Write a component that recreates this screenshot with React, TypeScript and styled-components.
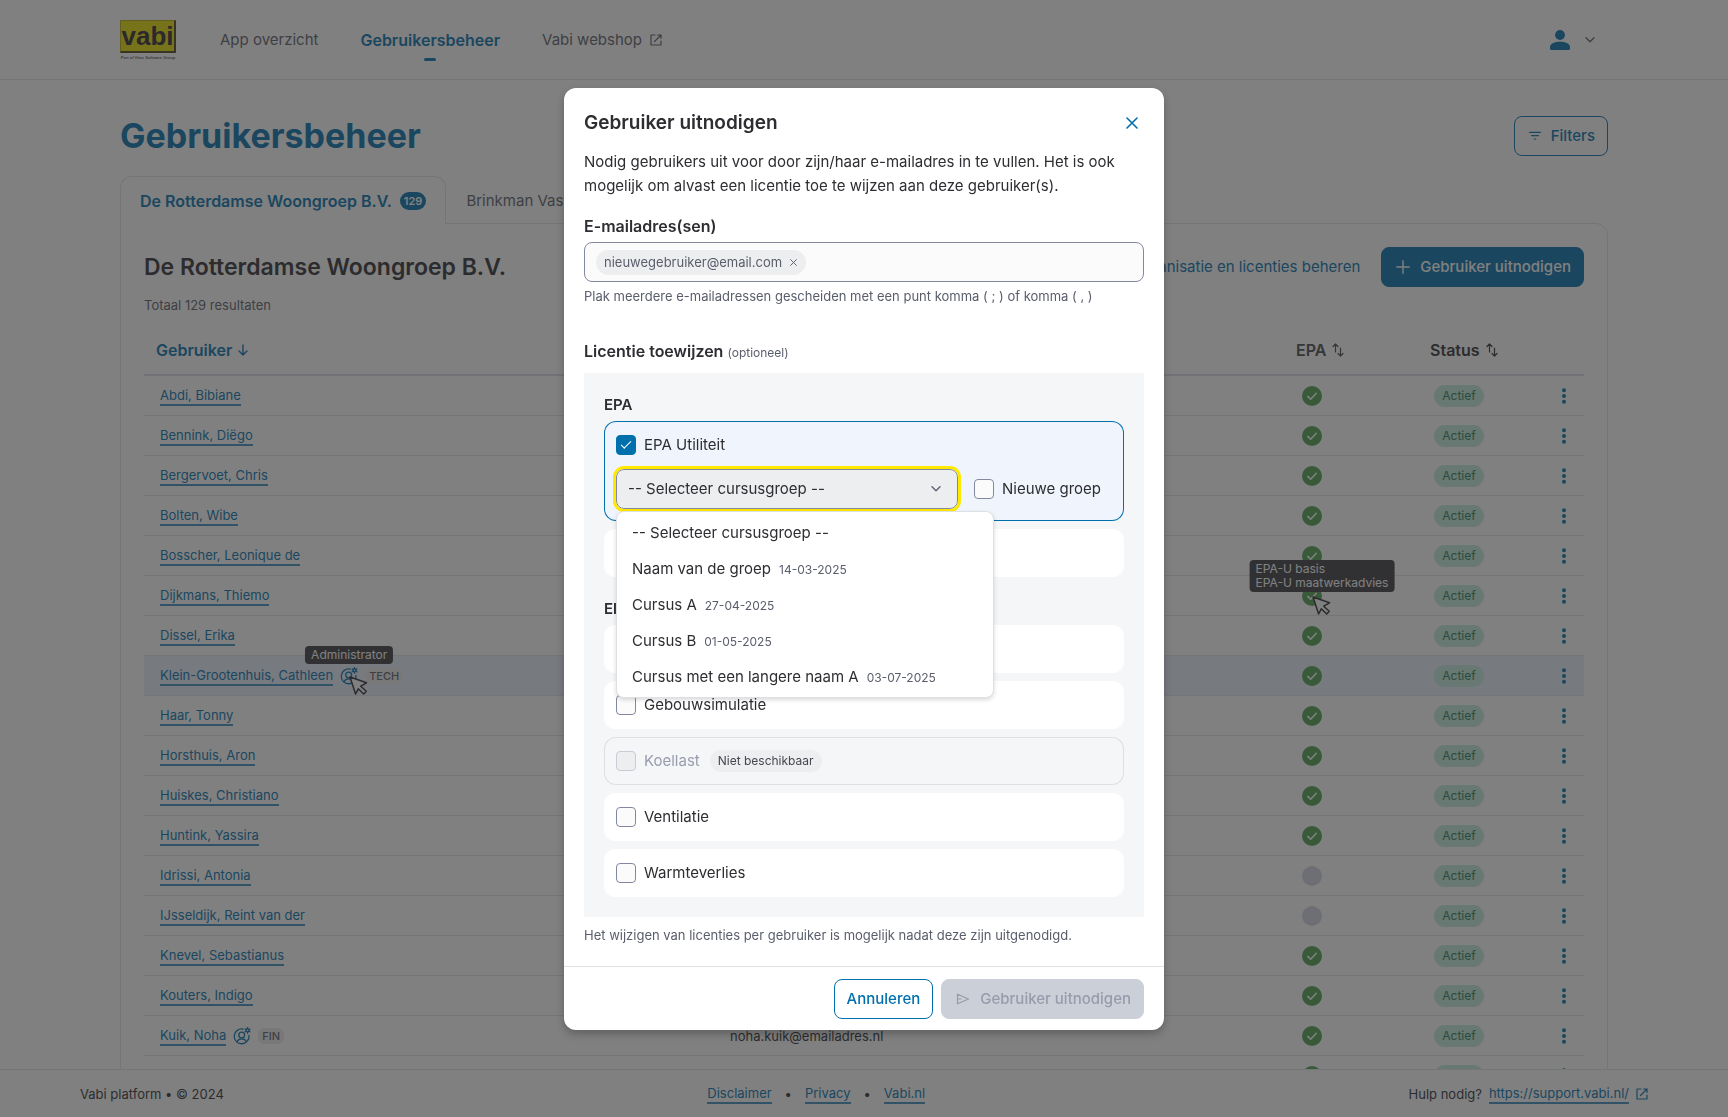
import React from 'react';
import styled, { createGlobalStyle } from 'styled-components';

const c = {
  blue: '#0070ad',
  text: '#2d2d32',
  muted: '#5a5d6b',
  line: '#e2e3e6',
  field: '#8388a0',
  pale: '#edeef0',
};

const GlobalStyle = createGlobalStyle`
  *, *::before, *::after { box-sizing: border-box; }
  body {
    margin: 0;
    background: #fff;
    color: ${c.text};
    font: 400 15px/24px Inter, "Noto Sans", sans-serif;
  }
  button, input, select { font: inherit; color: inherit; }
  button { cursor: pointer; }
  h1, h2, h3, p, ul { margin: 0; padding: 0; }
  svg { display: block; flex: none; }
`;

/* ---------- icons ---------- */

const Stroke = styled.svg`
  fill: none;
  stroke: currentColor;
  stroke-linecap: round;
  stroke-linejoin: round;
`;

const ExternalIcon = ({ color }: { color?: string }) => (
  <Stroke width={12} height={12} viewBox="0 0 12 12" strokeWidth={1.2} color={color}>
    <path d="M5 1H1v10h10V7M7.5 1H11v3.500M11 1 4.500 7.500" />
  </Stroke>
);

const ChevronIcon = () => (
  <Stroke width={10} height={6} viewBox="0 0 10 6" strokeWidth={1.3}>
    <path d="m1 .8 4 4 4-4" />
  </Stroke>
);

const CloseIcon = ({ size }: { size: number }) => (
  <Stroke width={size} height={size} viewBox="0 0 12 12" strokeWidth={1.6}>
    <path d="m1 1 10 10M11 1 1 11" />
  </Stroke>
);

const PlusIcon = () => (
  <Stroke width={14} height={14} viewBox="0 0 14 14" strokeWidth={1.4}>
    <path d="M7 .8v12.400M.8 7h12.400" />
  </Stroke>
);

const FilterIcon = () => (
  <Stroke width={12} height={12} viewBox="0 0 12 12" strokeWidth={1.2}>
    <path d="M.6 2.400h10.800M2.600 5.600h6.800M5.200 9h1.600" />
  </Stroke>
);

const ArrowDownIcon = () => (
  <Stroke width={10} height={12} viewBox="0 0 10 12" strokeWidth={1.4}>
    <path d="M5 1v10M1 7l4 4 4-4" />
  </Stroke>
);

const SortIcon = () => (
  <Stroke width={12} height={14} viewBox="0 0 12 14" strokeWidth={1.2}>
    <path d="M3.500 9V1M1 3.500 3.500 1 6 3.500M8.500 5v8M6 10.500l2.500 2.500 2.500-2.500" />
  </Stroke>
);

const SendIcon = () => (
  <Stroke width={14} height={12} viewBox="0 0 14 12" strokeWidth={1.2}>
    <path d="M1.500 1.200 12.500 6l-11 4.800zM1.500 6H5" />
  </Stroke>
);

const UserIcon = () => (
  <svg width={20} height={20} viewBox="0 0 20 20" fill={c.blue}>
    <circle cx="10" cy="5" r="4.900" />
    <path d="M0 17c0-3.400 5-5.200 10-5.200S20 13.600 20 17v1.500a1.500 1.500 0 0 1-1.500 1.500h-17A1.500 1.500 0 0 1 0 18.500z" />
  </svg>
);

const AdminIcon = () => (
  <Stroke width={18} height={18} viewBox="0 0 18 18" strokeWidth={1.3} color={c.blue}>
    <path d="M10.200 2.100A7.400 7.400 0 1 0 16 8.400" />
    <circle cx="8.700" cy="8" r="2.900" />
    <path d="M4 14.800c.8-2 2.500-3 4.700-3s3.900 1 4.700 3" />
    <circle cx="14.500" cy="3.400" r="1.500" />
    <path d="M14.500.6v1.200M14.500 5v1.200M12.100 2l1 .6M15.900 4.200l1 .6M12.100 4.800l1-.6M15.900 2.600l1-.6" />
  </Stroke>
);

const CheckCircle = () => (
  <svg width={20} height={20} viewBox="0 0 20 20">
    <circle cx="10" cy="10" r="10" fill="#4fa04c" />
    <path d="m5.800 10.400 2.900 2.900 5.600-6" fill="none" stroke="#fff" strokeWidth={1.5} strokeLinecap="round" strokeLinejoin="round" />
  </svg>
);

const DotsIcon = () => (
  <svg width={4} height={16} viewBox="0 0 4 16" fill={c.blue}>
    <circle cx="2" cy="2.200" r="2" />
    <circle cx="2" cy="8" r="2" />
    <circle cx="2" cy="13.800" r="2" />
  </svg>
);

const PointerIcon = () => (
  <svg width={20} height={20} viewBox="0 0 20 20">
    <path
      d="m1 1 16.500 5.800-5.800 3.400 5.600 5-2.600 2.800-5.400-5.200L6.600 18z"
      fill="#fff" stroke="#2d2d32" strokeWidth={1.5} strokeLinejoin="round"
    />
  </svg>
);

/* ---------- page ---------- */

const Shell = styled.div`
  height: 100vh;
  display: flex;
  flex-direction: column;
`;

const TopBar = styled.header`
  flex: none;
  display: flex;
  align-items: center;
  height: 80px;
  padding: 0 120px;
  border-bottom: 1px solid ${c.line};
`;

const Logo = styled.a`
  display: flex;
  flex-direction: column;
  width: 56px;
  gap: 2px;
  text-decoration: none;
`;

const LogoMark = styled.span`
  height: 33px;
  border: 1px solid #b3ab10;
  border-right: 2px solid #4b4818;
  border-bottom: 2px solid #4b4818;
  background: #e9df00;
  color: #2d262d;
  font: 700 26px/30px "Liberation Sans", Arial, sans-serif;
  text-align: center;
`;

const LogoCaption = styled.span`
  color: ${c.muted};
  font: 700 4px/5px "Liberation Sans", Arial, sans-serif;
  text-align: center;
  white-space: nowrap;
`;

const Nav = styled.nav`
  display: flex;
  gap: 42px;
  margin-left: 44px;
`;

const NavLink = styled.a<{ $active?: boolean }>`
  position: relative;
  display: flex;
  align-items: center;
  gap: 8px;
  color: ${p => (p.$active ? c.blue : c.muted)};
  font-size: ${p => (p.$active ? 16 : 15)}px;
  font-weight: ${p => (p.$active ? 600 : 400)};
  text-decoration: none;
  ${p => p.$active && `
    &::after {
      content: '';
      position: absolute;
      left: 50%;
      bottom: -9px;
      width: 12px;
      height: 3px;
      margin-left: -6px;
      border-radius: 2px;
      background: ${c.blue};
    }
  `}
`;

const AccountButton = styled.button`
  display: flex;
  align-items: center;
  gap: 15px;
  margin-left: auto;
  padding: 0 13px;
  border: 0;
  background: none;
  color: ${c.muted};
`;

const Main = styled.main`
  flex: 1;
  min-height: 0;
  overflow: hidden;
  padding: 36px 120px 0;
`;

const SpreadRow = styled.div`
  display: flex;
  align-items: center;
  justify-content: space-between;
  height: 40px;
`;

const PageTitle = styled.h1`
  color: ${c.blue};
  font-size: 34px;
  line-height: 40px;
  font-weight: 700;
`;

const Button = styled.button<{ $kind: 'solid' | 'outline' | 'text' }>`
  display: flex;
  align-items: center;
  gap: 8px;
  height: 40px;
  padding: 0 12px;
  border: 1px solid ${p => (p.$kind === 'text' ? 'transparent' : c.blue)};
  border-radius: 8px;
  background: ${p => (p.$kind === 'solid' ? c.blue : p.$kind === 'outline' ? '#fff' : 'none')};
  color: ${p => (p.$kind === 'solid' ? '#fff' : c.blue)};
  font-weight: ${p => (p.$kind === 'text' ? 400 : 500)};
  white-space: nowrap;
  svg { margin: 0 2px; }
  &:disabled {
    border-color: #cbcfd8;
    background: #cbcfd8;
    color: #979bab;
  }
`;

const Actions = styled.div`
  display: flex;
  gap: 8px;
`;

const Tabs = styled.div`
  display: flex;
  height: 48px;
  margin-top: 20px;
  margin-bottom: -1px;
`;

const Tab = styled.button<{ $active?: boolean }>`
  position: relative;
  display: flex;
  align-items: center;
  gap: 8px;
  padding: 0 19px;
  border: 1px solid ${p => (p.$active ? c.line : 'transparent')};
  border-bottom: 0;
  border-radius: 12px 12px 0 0;
  background: ${p => (p.$active ? '#fff' : 'none')};
  color: ${p => (p.$active ? c.blue : c.muted)};
  font-size: ${p => (p.$active ? 16 : 15)}px;
  font-weight: ${p => (p.$active ? 600 : 400)};
`;

const Count = styled.span`
  padding: 0 4px;
  border-radius: 9px;
  background: ${c.blue};
  color: #fff;
  font-size: 11px;
  line-height: 18px;
  font-weight: 600;
`;

const Panel = styled.section`
  height: 1000px;
  padding: 23px 23px 0;
  border: 1px solid ${c.line};
  border-radius: 0 12px 12px 12px;
`;

const PanelTitle = styled.h2`
  font-size: 23px;
  line-height: 32px;
  font-weight: 600;
`;

const Total = styled.p`
  margin-top: 8px;
  color: ${c.muted};
  font-size: 13px;
  line-height: 20px;
`;

const Table = styled.table`
  width: 100%;
  margin-top: 11px;
  border-collapse: separate;
  border-spacing: 0;
  table-layout: fixed;
`;

const Th = styled.th`
  height: 50px;
  padding: 0 12px;
  border-bottom: 2px solid #d9dbe6;
  text-align: left;
`;

const SortButton = styled.button<{ $tone?: string }>`
  display: flex;
  align-items: center;
  gap: 6px;
  padding: 0;
  border: 0;
  background: none;
  color: ${p => p.$tone ?? c.text};
  font-size: 16px;
  font-weight: 600;
`;

const Row = styled.tr<{ $hover?: boolean }>`
  background: ${p => (p.$hover ? '#e9effd' : 'none')};
`;

const Td = styled.td`
  height: 40px;
  padding: 0 16px;
  border-bottom: 1px solid ${c.line};
  font-size: 13px;
  line-height: 18px;
`;

const CellFlex = styled.div`
  display: flex;
  align-items: center;
  gap: 7px;
`;

const Link = styled.a`
  border-bottom: 2px solid #3d90c0;
  color: ${c.blue};
  line-height: 18px;
  text-decoration: none;
`;

const RoleTag = styled.span`
  padding: 0 4px;
  border-radius: 6px;
  background: #ececee;
  color: ${c.muted};
  font-size: 11px;
  line-height: 16px;
  font-weight: 500;
`;

const Anchor = styled.span`
  position: relative;
  display: block;
`;

const Tooltip = styled.span`
  position: absolute;
  z-index: 1;
  left: 50%;
  bottom: 100%;
  margin-bottom: 3px;
  padding: 2px 6px;
  border-radius: 4px;
  background: #3b3b40;
  color: #fff;
  font-size: 12px;
  line-height: 14px;
  white-space: nowrap;
  transform: translateX(-50%);
`;

const EpaTooltip = styled(Tooltip)`
  left: 100%;
  margin-bottom: -6px;
`;

const Pointer = styled.span`
  position: absolute;
  z-index: 2;
  left: 50%;
  top: 50%;
`;

const Empty = styled.span`
  display: block;
  width: 20px;
  height: 20px;
  border-radius: 50%;
  background: #d2d4e2;
`;

const EpaCell = styled.div`
  width: 20px;
  margin-left: 2px;
`;

const Status = styled.span`
  display: block;
  width: 50px;
  height: 22px;
  border-radius: 11px;
  background: #c4ebdd;
  color: #1f7d59;
  font-size: 12px;
  line-height: 22px;
  text-align: center;
`;

const MenuButton = styled.button`
  display: block;
  margin-left: auto;
  padding: 2px;
  border: 0;
  background: none;
`;

const Footer = styled.footer`
  flex: none;
  display: flex;
  align-items: center;
  justify-content: space-between;
  height: 48px;
  padding: 0 80px;
  border-top: 1px solid ${c.line};
  background: #fff;
  font-size: 13px;
`;

const FooterGroup = styled.div`
  display: flex;
  align-items: center;
  gap: 7px;
`;

const FooterLinks = styled(FooterGroup)`
  gap: 13px;
`;

/* ---------- dialog ---------- */

const Overlay = styled.div`
  position: fixed;
  inset: 0;
  z-index: 10;
  display: flex;
  align-items: center;
  justify-content: center;
  padding-top: 1px;
  background: rgba(43, 43, 43, 0.6);
`;

const Dialog = styled.div`
  width: 600px;
  max-width: 100%;
  border-radius: 12px;
  background: #fff;
  box-shadow: 0 4px 8px rgba(0, 0, 0, 0.25);
`;

const DialogBody = styled.div`
  padding: 20px;
`;

const DialogHead = styled.div`
  display: flex;
  align-items: center;
  justify-content: space-between;
  height: 30px;
`;

const DialogTitle = styled.h2`
  font-size: 19px;
  line-height: 30px;
  font-weight: 600;
`;

const IconButton = styled.button`
  display: grid;
  place-items: center;
  padding: 6px;
  border: 0;
  background: none;
  color: ${c.blue};
`;

const Intro = styled.p`
  margin-top: 12px;
`;

const FieldLabel = styled.label`
  display: block;
  margin: 16px 0 4px;
  font-size: 16px;
  font-weight: 600;
`;

const TokenField = styled.div`
  display: flex;
  align-items: center;
  gap: 8px;
  height: 40px;
  padding: 0 11px;
  border: 1px solid ${c.field};
  border-radius: 8px;
  background: #fbfbfb;
  input {
    flex: 1;
    min-width: 0;
    border: 0;
    outline: 0;
    background: none;
  }
`;

const Chip = styled.span`
  display: flex;
  align-items: center;
  gap: 2px;
  height: 25px;
  padding: 0 3px 0 8px;
  border-radius: 13px;
  background: ${c.pale};
  color: ${c.muted};
  font-size: 13px;
  button { color: ${c.muted}; }
`;

const Help = styled.p`
  color: ${c.muted};
  font-size: 13px;
  line-height: 21px;
`;

const HelpUnderField = styled(Help)`
  margin-top: 4px;
`;

const HelpUnderBox = styled(Help)`
  margin-top: 8px;
`;

const LicenseTitle = styled.h3`
  margin: 32px 0 8px;
  font-size: 16px;
  line-height: 24px;
  font-weight: 600;
`;

const Optional = styled.span`
  color: ${c.muted};
  font-size: 12px;
  font-weight: 400;
`;

const LicenseBox = styled.div`
  display: flex;
  flex-direction: column;
  gap: 20px;
  padding: 20px;
  background: #f5f6f8;
`;

const Group = styled.fieldset`
  display: flex;
  flex-direction: column;
  gap: 8px;
  min-width: 0;
  margin: 0;
  padding: 0;
  border: 0;
  legend {
    padding: 0 0 4px;
    font-weight: 600;
  }
`;

const Card = styled.div<{ $state?: 'on' | 'off' }>`
  padding: 0 12px;
  border-radius: 12px;
  background: ${p => (p.$state === 'on' ? '#f0f5fd' : p.$state === 'off' ? '#f5f6f8' : '#fff')};
  box-shadow: inset 0 0 0 1px ${p => (p.$state === 'on' ? c.blue : p.$state === 'off' ? '#dddfe3' : '#fff')};
`;

const CheckLabel = styled.label<{ $off?: boolean }>`
  display: flex;
  align-items: center;
  gap: 8px;
  color: ${p => (p.$off ? '#999cad' : c.text)};
  white-space: nowrap;
`;

const CardRow = styled.div`
  display: flex;
  align-items: center;
  gap: 10px;
  height: 48px;
`;

const Checkbox = styled.input`
  appearance: none;
  flex: none;
  display: grid;
  place-items: center;
  width: 20px;
  height: 20px;
  margin: 0;
  border: 1px solid ${c.field};
  border-radius: 4px;
  background: #fbfbfb;
  &:checked {
    border-color: ${c.blue};
    background: ${c.blue};
  }
  &:checked::after {
    content: '';
    width: 10px;
    height: 5px;
    margin-bottom: 3px;
    border: solid #fff;
    border-width: 0 0 1px 1px;
    transform: rotate(-45deg);
  }
  &:disabled {
    border-color: #c9ccd5;
    background: ${c.pale};
  }
`;

const Unavailable = styled.span`
  padding: 0 8px;
  border-radius: 11px;
  background: ${c.pale};
  color: #45474f;
  font-size: 12px;
  line-height: 22px;
`;

const CourseRow = styled.div`
  display: flex;
  align-items: center;
  gap: 16px;
  padding-bottom: 12px;
`;

const SelectWrap = styled.div`
  position: relative;
  flex: 0 1 342px;
`;

const Select = styled.select`
  appearance: none;
  display: block;
  width: 100%;
  height: 40px;
  padding: 0 11px;
  border: 1px solid ${c.field};
  border-radius: 8px;
  outline: 3px solid #ffe900;
  background: ${c.pale};
`;

const SelectArrow = styled.span`
  position: absolute;
  top: 17px;
  right: 17px;
  color: ${c.muted};
  pointer-events: none;
`;

const Options = styled.ul`
  position: absolute;
  z-index: 1;
  top: 42px;
  left: 0;
  width: 378px;
  padding: 3px 0 2px;
  border: 1px solid #dfe0e4;
  border-radius: 8px;
  background: #fff;
  box-shadow: 0 2px 4px rgba(0, 0, 0, 0.15);
  list-style: none;
`;

const Option = styled.li`
  display: flex;
  align-items: baseline;
  gap: 8px;
  height: 36px;
  padding: 6px 15px;
  small {
    color: ${c.muted};
    font-size: 12px;
    line-height: 20px;
  }
`;

const DialogFoot = styled.div`
  display: flex;
  align-items: center;
  justify-content: flex-end;
  gap: 8px;
  height: 64px;
  padding: 0 20px;
  border-top: 1px solid #dfe1e3;
`;

/* ---------- data ---------- */

type User = { name: string; epa: boolean; role?: string; email?: string; adminTip?: boolean; epaTip?: boolean; hover?: boolean };

const users: User[] = [
  { name: 'Abdi, Bibiane', epa: true },
  { name: 'Bennink, Diëgo', epa: true },
  { name: 'Bergervoet, Chris', epa: true },
  { name: 'Bolten, Wibe', epa: true },
  { name: 'Bosscher, Leonique de', epa: true },
  { name: 'Dijkmans, Thiemo', epa: true, epaTip: true },
  { name: 'Dissel, Erika', epa: true },
  { name: 'Klein-Grootenhuis, Cathleen', epa: true, role: 'TECH', adminTip: true, hover: true },
  { name: 'Haar, Tonny', epa: true },
  { name: 'Horsthuis, Aron', epa: true },
  { name: 'Huiskes, Christiano', epa: true },
  { name: 'Huntink, Yassira', epa: true },
  { name: 'Idrissi, Antonia', epa: false },
  { name: 'IJsseldijk, Reint van der', epa: false },
  { name: 'Knevel, Sebastianus', epa: true },
  { name: 'Kouters, Indigo', epa: true },
  { name: 'Kuik, Noha', epa: true, role: 'FIN', email: 'noha.kuik@emailadres.nl' },
  { name: '', epa: true },
];

const courses: [string, string?][] = [
  ['-- Selecteer cursusgroep --'],
  ['Naam van de groep', '14-03-2025'],
  ['Cursus A', '27-04-2025'],
  ['Cursus B', '01-05-2025'],
  ['Cursus met een langere naam A', '03-07-2025'],
];

function UserRow({ user }: { user: User }) {
  return (
    <Row $hover={user.hover}>
      <Td>
        <CellFlex>
          {user.name && <Link href="#">{user.name}</Link>}
          {user.role && (
            <Anchor>
              <AdminIcon />
              {user.adminTip && <Tooltip>Administrator</Tooltip>}
              {user.adminTip && <Pointer><PointerIcon /></Pointer>}
            </Anchor>
          )}
          {user.role && <RoleTag>{user.role}</RoleTag>}
        </CellFlex>
      </Td>
      <Td>{user.email}</Td>
      <Td>
        <EpaCell>
          <Anchor>
            {user.epa ? <CheckCircle /> : <Empty />}
            {user.epaTip && <EpaTooltip>EPA-U basis<br />EPA-U maatwerkadvies</EpaTooltip>}
            {user.epaTip && <Pointer><PointerIcon /></Pointer>}
          </Anchor>
        </EpaCell>
      </Td>
      <Td><Status>{user.name && 'Actief'}</Status></Td>
      <Td><MenuButton aria-label="Acties"><DotsIcon /></MenuButton></Td>
    </Row>
  );
}

function LicenseCard({ label }: { label?: string }) {
  return (
    <Card>
      <CardRow>
        {label && <CheckLabel><Checkbox type="checkbox" />{label}</CheckLabel>}
      </CardRow>
    </Card>
  );
}

function InviteDialog() {
  return (
    <Dialog role="dialog" aria-modal="true" aria-labelledby="invite-title">
      <DialogBody>
        <DialogHead>
          <DialogTitle id="invite-title">Gebruiker uitnodigen</DialogTitle>
          <IconButton aria-label="Sluiten"><CloseIcon size={12} /></IconButton>
        </DialogHead>
        <Intro>
          Nodig gebruikers uit voor door zijn/haar e-mailadres in te vullen. Het is ook mogelijk om alvast een
          licentie toe te wijzen aan deze gebruiker(s).
        </Intro>
        <FieldLabel htmlFor="emails">E-mailadres(sen)</FieldLabel>
        <TokenField>
          <Chip>
            nieuwegebruiker@email.com
            <IconButton aria-label="Verwijderen"><CloseIcon size={7} /></IconButton>
          </Chip>
          <input id="emails" type="text" />
        </TokenField>
        <HelpUnderField>Plak meerdere e-mailadressen gescheiden met een punt komma ( ; ) of komma ( , )</HelpUnderField>

        <LicenseTitle>Licentie toewijzen <Optional>(optioneel)</Optional></LicenseTitle>
        <LicenseBox>
          <Group>
            <legend>EPA</legend>
            <Card $state="on">
              <CardRow>
                <CheckLabel><Checkbox type="checkbox" defaultChecked />EPA Utiliteit</CheckLabel>
              </CardRow>
              <CourseRow>
                <SelectWrap>
                  <Select aria-label="Cursusgroep">
                    <option>-- Selecteer cursusgroep --</option>
                  </Select>
                  <SelectArrow><ChevronIcon /></SelectArrow>
                  <Options role="listbox" aria-label="Cursusgroepen">
                    {courses.map(([name, date]) => (
                      <Option key={name} role="option">{name}{date && <small>{date}</small>}</Option>
                    ))}
                  </Options>
                </SelectWrap>
                <CheckLabel><Checkbox type="checkbox" />Nieuwe groep</CheckLabel>
              </CourseRow>
            </Card>
            <LicenseCard />
          </Group>
          <Group>
            <legend>Elements</legend>
            <LicenseCard />
            <LicenseCard label="Gebouwsimulatie" />
            <Card $state="off">
              <CardRow>
                <CheckLabel $off><Checkbox type="checkbox" disabled />Koellast</CheckLabel>
                <Unavailable>Niet beschikbaar</Unavailable>
              </CardRow>
            </Card>
            <LicenseCard label="Ventilatie" />
            <LicenseCard label="Warmteverlies" />
          </Group>
        </LicenseBox>
        <HelpUnderBox>Het wijzigen van licenties per gebruiker is mogelijk nadat deze zijn uitgenodigd.</HelpUnderBox>
      </DialogBody>
      <DialogFoot>
        <Button $kind="outline">Annuleren</Button>
        <Button $kind="solid" disabled><SendIcon />Gebruiker uitnodigen</Button>
      </DialogFoot>
    </Dialog>
  );
}

export default function App() {
  return (
    <>
      <GlobalStyle />
      <Shell>
        <TopBar>
          <Logo href="#">
            <LogoMark>vabi</LogoMark>
            <LogoCaption>Part of Vitec Software Group</LogoCaption>
          </Logo>
          <Nav>
            <NavLink href="#">App overzicht</NavLink>
            <NavLink href="#" $active>Gebruikersbeheer</NavLink>
            <NavLink href="#">Vabi webshop <ExternalIcon /></NavLink>
          </Nav>
          <AccountButton aria-label="Account"><UserIcon /><ChevronIcon /></AccountButton>
        </TopBar>
        <Main>
          <SpreadRow>
            <PageTitle>Gebruikersbeheer</PageTitle>
            <Button $kind="outline"><FilterIcon />Filters</Button>
          </SpreadRow>
          <Tabs>
            <Tab $active>De Rotterdamse Woongroep B.V. <Count>129</Count></Tab>
            <Tab>Brinkman Vastgoed</Tab>
          </Tabs>
          <Panel>
            <SpreadRow>
              <PanelTitle>De Rotterdamse Woongroep B.V.</PanelTitle>
              <Actions>
                <Button $kind="text">Organisatie en licenties beheren</Button>
                <Button $kind="solid"><PlusIcon />Gebruiker uitnodigen</Button>
              </Actions>
            </SpreadRow>
            <Total>Totaal 129 resultaten</Total>
            <Table>
              <colgroup>
                <col />
                <col />
                <col width="134" />
                <col width="82" />
                <col width="84" />
              </colgroup>
              <thead>
                <tr>
                  <Th><SortButton $tone={c.blue}>Gebruiker <ArrowDownIcon /></SortButton></Th>
                  <Th />
                  <Th><SortButton $tone="#45464d">EPA <SortIcon /></SortButton></Th>
                  <Th colSpan={2}><SortButton>Status <SortIcon /></SortButton></Th>
                </tr>
              </thead>
              <tbody>
                {users.map(u => <UserRow key={u.name} user={u} />)}
              </tbody>
            </Table>
          </Panel>
        </Main>
        <Footer>
          <span>Vabi platform • © 2024</span>
          <FooterLinks>
            <Link href="#">Disclaimer</Link>
            <span>•</span>
            <Link href="#">Privacy</Link>
            <span>•</span>
            <Link href="#">Vabi.nl</Link>
          </FooterLinks>
          <FooterGroup>
            <span>Hulp nodig?</span>
            <Link href="#">https://support.vabi.nl/</Link>
            <ExternalIcon color={c.blue} />
          </FooterGroup>
        </Footer>
      </Shell>
      <Overlay>
        <InviteDialog />
      </Overlay>
    </>
  );
}
